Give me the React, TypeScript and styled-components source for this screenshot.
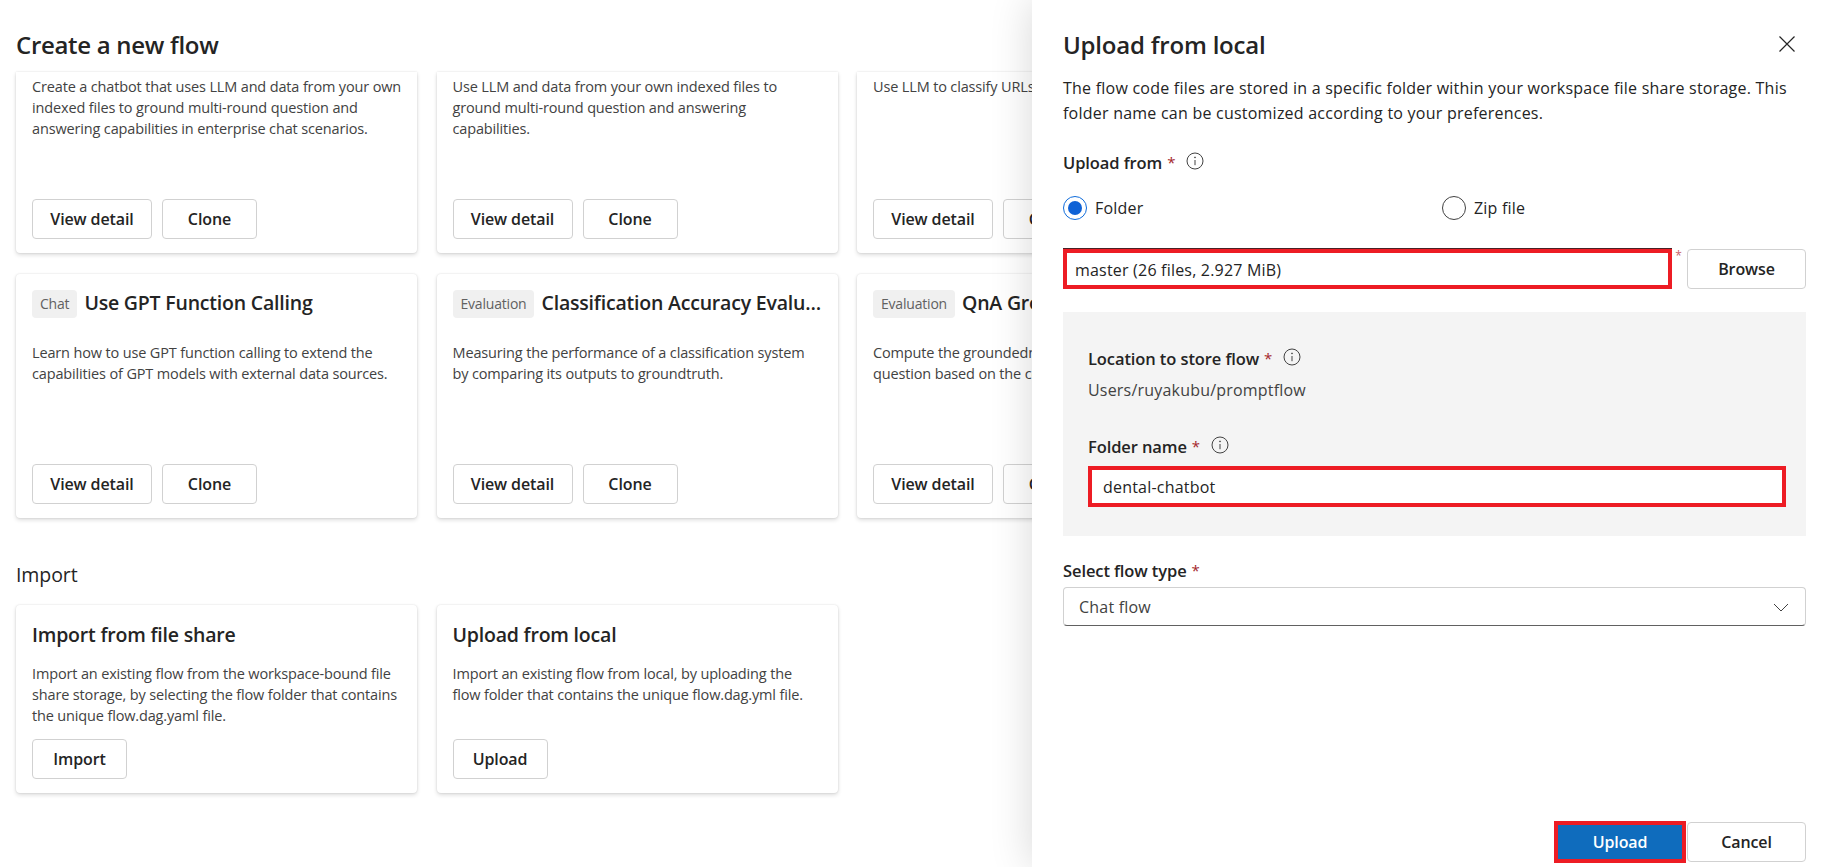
import React from 'react';
import styled, { createGlobalStyle } from 'styled-components';

const GlobalStyle = createGlobalStyle`
  html, body {
    margin: 0;
    padding: 0;
    height: 100%;
    overflow: hidden;
    background: #fff;
  }
  body {
    font-family: 'Open Sans', 'Liberation Sans', sans-serif;
    color: #242424;
  }
`;

const Page = styled.div`
  display: flex;
  width: 1828px;
  height: 867px;
  overflow: hidden;
`;

const Main = styled.main`
  flex: 0 0 1032px;
  padding-left: 16px;
  box-sizing: border-box;
  overflow: hidden;
`;

const PageHeader = styled.div`
  display: flex;
  align-items: center;
  height: 72px;
  padding-top: 16px;
  box-sizing: border-box;
`;

const PageTitle = styled.h1`
  margin: 0;
  font-size: 24px;
  font-weight: 600;
  letter-spacing: -0.3px;
`;

const CardGrid = styled.div`
  display: grid;
  grid-template-columns: repeat(3, 401px);
  gap: 21px 19.5px;
`;

const Card = styled.section<{ $height: number; $clipped?: boolean }>`
  display: flex;
  flex-direction: column;
  box-sizing: border-box;
  height: ${(props) => props.$height}px;
  padding: ${(props) => (props.$clipped ? '4px' : '16px')} 15px 14px 16px;
  background: #fff;
  border-radius: ${(props) => (props.$clipped ? '0 0 4px 4px' : '4px')};
  box-shadow: 0 2px 4px rgba(0, 0, 0, 0.14), 0 0 2px rgba(0, 0, 0, 0.12);
`;

const CardHead = styled.div`
  display: flex;
  align-items: center;
  gap: 7px;
  height: 28px;
  margin-bottom: 24px;
  min-width: 0;
`;

const Badge = styled.span`
  flex: none;
  padding: 0 8px;
  height: 28px;
  line-height: 27px;
  border-radius: 4px;
  background: #f0f0f0;
  color: #616161;
  font-size: 14px;
  letter-spacing: -0.2px;
`;

const CardTitle = styled.h3`
  margin: 0 0 3px;
  font-size: 19.5px;
  font-weight: 600;
  letter-spacing: -0.2px;
  white-space: nowrap;
  overflow: hidden;
  text-overflow: ellipsis;
`;

const ImportTitle = styled(CardTitle)`
  line-height: 24px;
  margin: 2px 0 16px;
`;

const CardText = styled.p`
  margin: 0;
  font-size: 14.5px;
  line-height: 21px;
  color: #424242;
  letter-spacing: -0.15px;
`;

const ButtonRow = styled.div`
  display: flex;
  gap: 10px;
  margin-top: auto;
`;

const Button = styled.button<{ $width: number; $primary?: boolean }>`
  box-sizing: border-box;
  flex: none;
  width: ${(props) => props.$width}px;
  height: ${(props) => (props.$primary ? '34px' : '40px')};
  padding: 0;
  border: 1px solid ${(props) => (props.$primary ? '#0f6cbd' : '#d1d1d1')};
  border-radius: ${(props) => (props.$primary ? '0' : '4px')};
  background: ${(props) => (props.$primary ? '#0f6cbd' : '#fff')};
  color: ${(props) => (props.$primary ? '#fff' : '#242424')};
  font-family: inherit;
  font-size: 16px;
  font-weight: 600;
  letter-spacing: -0.1px;
`;

const SectionTitle = styled.h2`
  margin: 0;
  height: 87px;
  padding-top: 45px;
  box-sizing: border-box;
  font-size: 19.5px;
  line-height: 24px;
  font-weight: 500;
  letter-spacing: -0.1px;
`;

const Panel = styled.aside`
  position: relative;
  z-index: 1;
  flex: 1;
  display: flex;
  flex-direction: column;
  box-sizing: border-box;
  padding: 0 22px 4px 31px;
  background: #fff;
  box-shadow: 0 0 40px rgba(0, 0, 0, 0.16);
`;

const PanelHeader = styled.div`
  display: flex;
  align-items: center;
  justify-content: space-between;
  height: 72px;
  padding-top: 16px;
  box-sizing: border-box;
`;

const PanelTitle = styled.h2`
  margin: 0;
  font-size: 24px;
  font-weight: 600;
  letter-spacing: -0.2px;
`;

const CloseIcon = styled.svg`
  width: 18px;
  height: 18px;
  margin-right: 10px;
  stroke: #242424;
  stroke-width: 1.2;
  fill: none;
`;

const Intro = styled.p`
  margin: 4px 0 0;
  font-size: 16px;
  line-height: 25px;
  letter-spacing: 0.23px;
  color: #242424;
`;

const Label = styled.div`
  display: flex;
  align-items: center;
  height: 24px;
  font-size: 16.5px;
  font-weight: 600;
  letter-spacing: -0.1px;
`;

const Required = styled.span`
  margin-left: 5px;
  color: #a4262c;
  font-size: 15px;
  font-weight: 400;
`;

const InfoIcon = styled.svg`
  width: 20px;
  height: 20px;
  margin-left: 10px;
  margin-top: -3px;
  stroke: #424242;
  fill: none;
`;

const UploadLabel = styled(Label)`
  margin-top: 24px;
`;

const RadioGroup = styled.div`
  display: grid;
  grid-template-columns: 379px 1fr;
  margin-top: 22px;
`;

const RadioOption = styled.label`
  display: flex;
  align-items: center;
  gap: 8px;
  height: 24px;
  font-size: 16px;
  letter-spacing: 0.2px;
`;

const RadioMark = styled.span<{ $checked?: boolean }>`
  display: flex;
  align-items: center;
  justify-content: center;
  box-sizing: border-box;
  width: 24px;
  height: 24px;
  border-radius: 50%;
  border: 1px solid ${(props) => (props.$checked ? '#0f6cdb' : '#424242')};

  &::after {
    content: '';
    display: ${(props) => (props.$checked ? 'block' : 'none')};
    width: 14px;
    height: 14px;
    border-radius: 50%;
    background: #0f62d6;
  }
`;

const FileRow = styled.div`
  display: flex;
  justify-content: space-between;
  margin-top: 29px;
`;

const HighlightInput = styled.div<{ $width?: number; $height: number; $topLine?: boolean }>`
  position: relative;
  display: flex;
  align-items: center;
  box-sizing: border-box;
  width: ${(props) => (props.$width ? `${props.$width}px` : '100%')};
  height: ${(props) => props.$height}px;
  padding: ${(props) => (props.$topLine ? '2px' : '0')} 0 0 8px;
  border: 4px solid #ed1c24;
  background: #fff;
  box-shadow: ${(props) => (props.$topLine ? '0 -1px 0 #4a2226' : 'none')};
  font-size: 16px;
  letter-spacing: 0.2px;
`;

const FolderInput = styled(HighlightInput)`
  padding-left: 11px;
`;

const InputStar = styled.span`
  position: absolute;
  right: -14px;
  top: -6px;
  color: #c9606a;
  font-size: 12px;
`;

const GreyBox = styled.div`
  margin-top: 23px;
  padding: 34px 20px 29px 25px;
  background: #f4f4f4;
`;

const PathText = styled.div`
  margin-top: 8px;
  font-size: 16px;
  line-height: 24px;
  letter-spacing: 0.2px;
  color: #424242;
`;

const FolderLabel = styled(Label)`
  margin: 32px 0 8px;
`;

const SelectLabel = styled(Label)`
  margin-top: 22px;
`;

const Select = styled.div`
  display: flex;
  align-items: center;
  justify-content: space-between;
  box-sizing: border-box;
  height: 39px;
  margin-top: 5px;
  padding: 0 15px;
  border: 1px solid #d1d1d1;
  border-bottom-color: #616161;
  border-radius: 4px;
  font-size: 16px;
  letter-spacing: 0.2px;
  color: #424242;
`;

const Chevron = styled.svg`
  width: 18px;
  height: 18px;
  stroke: #424242;
  stroke-width: 1;
  fill: none;
`;

const Footer = styled.div`
  display: flex;
  justify-content: flex-end;
  align-items: center;
  margin-top: auto;
`;

const PrimaryFrame = styled.div`
  display: flex;
  box-sizing: border-box;
  width: 132px;
  height: 42px;
  border: 4px solid #ed1c24;
  margin-right: 1px;
`;

const Info = () => (
  <InfoIcon viewBox="0 0 20 20">
    <circle cx="10" cy="10" r="8" />
    <path d="M10 9v5.2" />
    <circle cx="10" cy="6.4" r="0.5" />
  </InfoIcon>
);

const Req = () => <Required>*</Required>;

const FlowButtons = () => (
  <ButtonRow>
    <Button $width={120}>View detail</Button>
    <Button $width={95}>Clone</Button>
  </ButtonRow>
);

const App: React.FC = () => {
  return (
    <>
      <GlobalStyle />
      <Page>
        <Main>
          <PageHeader>
            <PageTitle>Create a new flow</PageTitle>
          </PageHeader>
          <CardGrid>
            <Card $height={181} $clipped>
              <CardText>
                Create a chatbot that uses LLM and data from your own indexed
                files to ground multi-round question and answering capabilities
                in enterprise chat scenarios.
              </CardText>
              <FlowButtons />
            </Card>
            <Card $height={181} $clipped>
              <CardText>
                Use LLM and data from your own indexed files to ground
                multi-round question and answering capabilities.
              </CardText>
              <FlowButtons />
            </Card>
            <Card $height={181} $clipped>
              <CardText>Use LLM to classify URLs</CardText>
              <FlowButtons />
            </Card>
            <Card $height={244}>
              <CardHead>
                <Badge>Chat</Badge>
                <CardTitle>Use GPT Function Calling</CardTitle>
              </CardHead>
              <CardText>
                Learn how to use GPT function calling to extend the capabilities
                of GPT models with external data sources.
              </CardText>
              <FlowButtons />
            </Card>
            <Card $height={244}>
              <CardHead>
                <Badge>Evaluation</Badge>
                <CardTitle>Classification Accuracy Evaluation</CardTitle>
              </CardHead>
              <CardText>
                Measuring the performance of a classification system by comparing
                its outputs to groundtruth.
              </CardText>
              <FlowButtons />
            </Card>
            <Card $height={244}>
              <CardHead>
                <Badge>Evaluation</Badge>
                <CardTitle>QnA Groundedness</CardTitle>
              </CardHead>
              <CardText>
                Compute the groundedness of the answer for each question based on
                the context.
              </CardText>
              <FlowButtons />
            </Card>
          </CardGrid>
          <SectionTitle>Import</SectionTitle>
          <CardGrid>
            <Card $height={188}>
              <ImportTitle>Import from file share</ImportTitle>
              <CardText>
                Import an existing flow from the workspace-bound file share
                storage, by selecting the flow folder that contains the unique
                flow.dag.yaml file.
              </CardText>
              <ButtonRow>
                <Button $width={95}>Import</Button>
              </ButtonRow>
            </Card>
            <Card $height={188}>
              <ImportTitle>Upload from local</ImportTitle>
              <CardText>
                Import an existing flow from local, by uploading the flow folder
                that contains the unique flow.dag.yml file.
              </CardText>
              <ButtonRow>
                <Button $width={95}>Upload</Button>
              </ButtonRow>
            </Card>
          </CardGrid>
        </Main>
        <Panel>
          <PanelHeader>
            <PanelTitle>Upload from local</PanelTitle>
            <CloseIcon viewBox="0 0 18 18">
              <path d="M1.5 1.5l15 15M16.5 1.5l-15 15" />
            </CloseIcon>
          </PanelHeader>
          <Intro>
            The flow code files are stored in a specific folder within your
            workspace file share storage. This folder name can be customized
            according to your preferences.
          </Intro>
          <UploadLabel>
            Upload from <Req /> <Info />
          </UploadLabel>
          <RadioGroup>
            <RadioOption>
              <RadioMark $checked />
              Folder
            </RadioOption>
            <RadioOption>
              <RadioMark />
              Zip file
            </RadioOption>
          </RadioGroup>
          <FileRow>
            <HighlightInput $width={609} $height={40} $topLine>
              master (26 files, 2.927 MiB)
              <InputStar>*</InputStar>
            </HighlightInput>
            <Button $width={119}>Browse</Button>
          </FileRow>
          <GreyBox>
            <Label>
              Location to store flow <Req /> <Info />
            </Label>
            <PathText>Users/ruyakubu/promptflow</PathText>
            <FolderLabel>
              Folder name <Req /> <Info />
            </FolderLabel>
            <FolderInput $height={41}>dental-chatbot</FolderInput>
          </GreyBox>
          <SelectLabel>
            Select flow type <Req />
          </SelectLabel>
          <Select>
            Chat flow
            <Chevron viewBox="0 0 18 18">
              <path d="M2 6l7 7 7-7" />
            </Chevron>
          </Select>
          <Footer>
            <PrimaryFrame>
              <Button $width={124} $primary>
                Upload
              </Button>
            </PrimaryFrame>
            <Button $width={119}>Cancel</Button>
          </Footer>
        </Panel>
      </Page>
    </>
  );
};

export default App;
